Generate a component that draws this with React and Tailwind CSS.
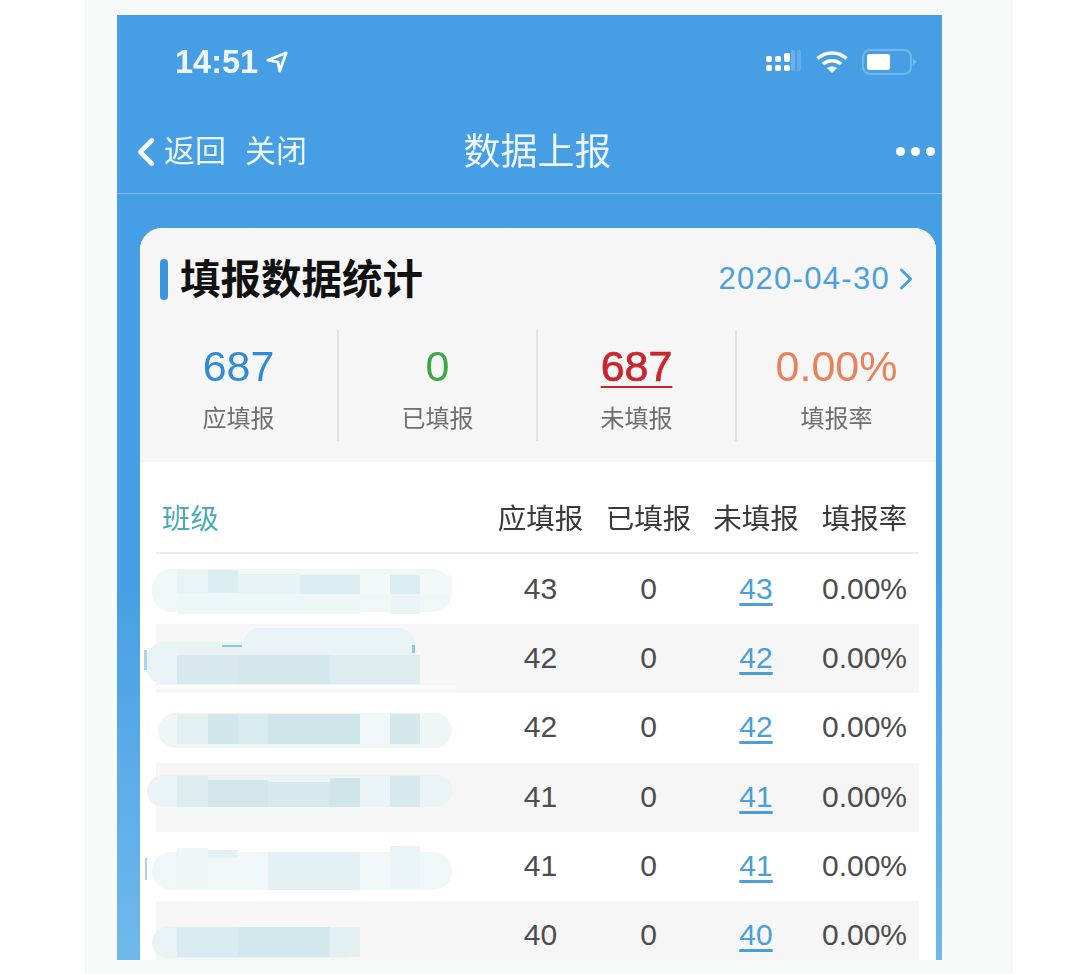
import { ChevronLeft, ChevronRight } from "lucide-react";

const stats = [
  { value: "687", label: "应填报", color: "text-[#2f8ad8]" },
  { value: "0", label: "已填报", color: "text-[#3aa845]" },
  { value: "687", label: "未填报", color: "text-[#c9252d] underline decoration-2 underline-offset-[5px] [-webkit-text-stroke:0.7px_#c9252d]" },
  { value: "0.00%", label: "填报率", color: "text-[#e8825a]" },
];

const rows = [43, 42, 42, 41, 41, 40];

// pixelated patches that hide the class names: [x, y, w, h, colour, radius], page coords
const patches = [
  [
    [152, 569, 300, 43, "#f0f7f8", 20],
    [177, 570, 31, 24, "#e8f3f5"],
    [208, 570, 30, 23, "#dbedf0"],
    [238, 574, 62, 20, "#e6f2f4"],
    [300, 575, 60, 19, "#dbedf0"],
    [360, 575, 30, 19, "#f3f9f9"],
    [390, 575, 30, 19, "#dbedf0"],
    [420, 575, 32, 19, "#f3f8f9"],
    [177, 594, 183, 20, "#eef7f8"],
    [390, 594, 30, 20, "#eaf4f6"],
  ],
  [
    [145, 642, 275, 42, "#e9f2f4", 20],
    [243, 628, 172, 32, "#e9f2f4", 18],
    [144, 650, 3, 20, "#a9d4ee"],
    [222, 645, 20, 2, "#8ccbd5"],
    [412, 645, 3, 8, "#8ccbd5"],
    [177, 655, 61, 29, "#d8e9ee"],
    [238, 655, 92, 29, "#d3e7ec"],
    [330, 655, 90, 29, "#dcecef"],
    [156, 685, 300, 4, "#fbfbfb"],
  ],
  [
    [158, 713, 294, 35, "#eef6f7", 18],
    [177, 714, 31, 30, "#e2f0f2"],
    [208, 714, 30, 30, "#cfe6ea"],
    [238, 714, 30, 30, "#d8ebee"],
    [268, 714, 92, 30, "#cde5e9"],
    [360, 714, 30, 30, "#f0f7f8"],
    [390, 714, 30, 30, "#d4e8ec"],
  ],
  [
    [147, 775, 305, 32, "#eaf3f5", 16],
    [177, 776, 31, 31, "#dcecef"],
    [208, 780, 60, 27, "#d3e7eb"],
    [268, 782, 62, 25, "#d6e9ec"],
    [330, 778, 30, 29, "#cfe5e9"],
    [390, 776, 30, 31, "#d6e9ed"],
    [177, 807, 183, 11, "#f3f8f8"],
  ],
  [
    [152, 852, 300, 38, "#eff7f8", 19],
    [177, 848, 31, 42, "#eef6f7"],
    [208, 850, 30, 8, "#e4f1f3"],
    [268, 852, 92, 38, "#e3f1f3"],
    [390, 846, 30, 42, "#eaf4f6"],
    [145, 858, 2, 22, "#a9d4ee"],
  ],
  [
    [152, 927, 208, 31, "#e9f3f5", 16],
    [177, 927, 61, 30, "#d8ebef"],
    [238, 927, 92, 30, "#d3e8ec"],
    [330, 927, 30, 30, "#e3f0f2"],
  ],
];

function StatusIcons() {
  return (
    <div className="flex items-center gap-[14px] mr-[25px]">
      <svg width="36" height="24" viewBox="0 0 36 24" fill="#fff">
        <rect x="0" y="6" width="6" height="6" rx="2" />
        <rect x="0" y="15" width="6" height="6" rx="2" />
        <rect x="9" y="6" width="6" height="6" rx="2" />
        <rect x="9" y="15" width="6" height="6" rx="2" />
        <rect x="18" y="3" width="6" height="9" rx="2" />
        <rect x="18" y="15" width="6" height="6" rx="2" />
        <rect x="25" y="0" width="4" height="21" rx="1.500" opacity="0.2" />
        <rect x="31" y="0" width="4" height="21" rx="1.500" opacity="0.15" />
      </svg>
      <svg width="32" height="24" viewBox="0 0 32 24" fill="none" stroke="#fff" strokeWidth="3.500">
        <path d="M1.500 8.500C9.500 1 22.500 1 30.500 8.500" />
        <path d="M7 14c5-4.500 13-4.500 18 0" />
        <path d="M16 23l-5-5c3-2 7-2 10 0z" fill="#fff" stroke="none" />
      </svg>
      <svg width="55" height="26" viewBox="0 0 55 26" fill="none">
        <rect x="1" y="1" width="48" height="24" rx="7" stroke="#fff" strokeOpacity="0.25" strokeWidth="2" />
        <rect x="5" y="5" width="23" height="16" rx="2.500" fill="#fff" />
        <path d="M51 9l3 4-3 4z" fill="#fff" fillOpacity="0.3" />
      </svg>
    </div>
  );
}

export default function App() {
  return (
    <div className="w-[1080px] h-[974px] bg-white pl-[85px] font-['Liberation_Sans','Noto_Sans_CJK_SC',sans-serif]">
      <div className="w-[928px] h-full bg-[#f8fafa] pl-[32px] pt-[15px]">
        <div className="w-[825px] h-[945px] overflow-hidden bg-gradient-to-b from-[#469fe4] from-60% to-[#6fb9ec]">
          {/* Status bar */}
          <div className="h-[94px] flex items-center justify-between pl-[58px] blur-[0.6px]">
            <div className="flex items-center gap-[8px] text-[#eef6fd]">
              <span className="text-[32.500px] font-bold leading-none">14:51</span>
              <svg width="22" height="22" viewBox="0 0 24 24" fill="none" stroke="#fff" strokeWidth="3" strokeLinejoin="round">
                <path d="M2 10L22 2l-7 20-2-10z" />
              </svg>
            </div>
            <StatusIcons />
          </div>

          {/* Nav bar */}
          <div className="relative h-[85px] flex items-center justify-between border-b border-[#7dbbec] text-[#edf5fc] pl-[20px] pr-[7px]">
            <div className="flex items-center pt-[2px] text-[31px] blur-[0.6px]">
              <ChevronLeft className="w-[46px] h-[46px] -ml-[14px] -mr-[5px] text-[#f2f8fe]" strokeWidth={2.400} />
              <span>返回</span>
              <span className="ml-[19px]">关闭</span>
            </div>
            <div className="absolute left-[16px] right-0 pt-[4px] text-center text-[37px] blur-[0.6px]">数据上报</div>
            <div className="flex items-center gap-[6px] blur-[0.6px]">
              <div className="w-[9px] h-[9px] rounded-full bg-white" />
              <div className="w-[9px] h-[9px] rounded-full bg-white" />
              <div className="w-[9px] h-[9px] rounded-full bg-white" />
            </div>
          </div>

          {/* Card */}
          <div className="mt-[34px] ml-[23px] w-[796px] h-[760px] rounded-t-[22px] bg-white overflow-hidden blur-[0.6px]">
            <div className="h-[234px] bg-[#f6f6f6]">
              <div className="h-[102px] flex items-center justify-between pl-[20px] pr-[22px]">
                <div className="flex items-center gap-[12px]">
                  <div className="w-[8px] h-[41px] rounded-full bg-[#3a93dd]" />
                  <span className="pt-[2px] text-[40.500px] font-bold text-[#111]">填报数据统计</span>
                </div>
                <div className="flex items-center text-[#4a9fdc] text-[31px] tracking-[1.300px]">
                  <span>2020-04-30</span>
                  <ChevronRight className="w-[36px] h-[36px] -ml-[2px] -mr-[10px]" strokeWidth={2} />
                </div>
              </div>
              <div className="grid grid-cols-4 h-[111px]">
                {stats.map((s, i) => (
                  <div
                    key={s.label}
                    className={`flex flex-col items-center ${i < 3 ? "border-r-2 border-[#e2e2e2]" : ""}`}
                  >
                    <span className={`mt-[15px] text-[43px] leading-[43px] ${s.color}`}>{s.value}</span>
                    <span className="mt-[17px] text-[24px] leading-[28px] text-[#6f6f6f]">{s.label}</span>
                  </div>
                ))}
              </div>
            </div>

            <div className="pl-[16px] pr-[17px]">
              <div className="h-[92px] pt-[25px] grid grid-cols-[330px_109px_107px_108px_109px] items-center border-b-2 border-[#ececec] text-[28.500px] text-[#3a3a3a]">
                <span className="pl-[6px] text-[#49abb8]">班级</span>
                <span className="text-center">应填报</span>
                <span className="text-center">已填报</span>
                <span className="text-center">未填报</span>
                <span className="text-center">填报率</span>
              </div>
              <div className="mt-[1px]">
                {rows.map((n, i) => (
                  <div
                    key={i}
                    className={`relative h-[69.2px] pb-[2px] grid grid-cols-[330px_109px_107px_108px_109px] items-center text-[30px] text-[#4d4d4d] ${i % 2 === 1 ? "bg-[#f6f6f6]" : ""}`}
                  >
                    <div />
                    {patches[i].map(([x, y, w, h, color, radius], j) => (
                      <div
                        key={j}
                        className="absolute"
                        style={{
                          left: x - 156,
                          top: y - (555 + 69.2 * i),
                          width: w,
                          height: h,
                          background: color,
                          borderRadius: radius || 0,
                        }}
                      />
                    ))}
                    <span className="text-center">{n}</span>
                    <span className="text-center">0</span>
                    <span className="text-center text-[#4a9fd8] underline underline-offset-[4px]">{n}</span>
                    <span className="text-center">0.00%</span>
                  </div>
                ))}
              </div>
            </div>
          </div>
        </div>
      </div>
    </div>
  );
}
